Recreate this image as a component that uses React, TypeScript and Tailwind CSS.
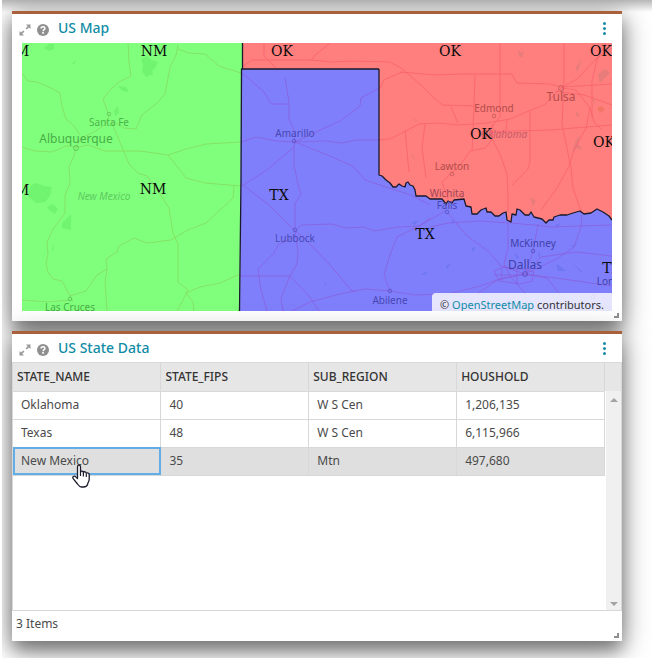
import type { ReactNode } from "react";

const rows = [
  { name: "Oklahoma", fips: "40", region: "W S Cen", households: "1,206,135" },
  { name: "Texas", fips: "48", region: "W S Cen", households: "6,115,966" },
  { name: "New Mexico", fips: "35", region: "Mtn", households: "497,680", selected: true },
];

const columns = ["STATE_NAME", "STATE_FIPS", "SUB_REGION", "HOUSHOLD"];

const river =
  "L379 175 L382 176 L386 180 L390 183 L393 187 L396 187 L399 184 L402 186 L405 187 L406 183 L408 182 L410 185 L413 186 L415 190 L416 196 L426 196 L430 199 L442 199 L446 204 L448 201 L452 203 L454 200 L464 199 L466 206 L471 207 L472 214 L477 214 L481 210 L486 208 L487 212 L491 212 L495 216 L499 216 L503 213 L506 212 L507 220 L511 222 L512 214 L516 215 L517 209 L520 210 L525 215 L529 215 L531 212 L534 217 L538 218 L542 219 L546 223 L549 220 L553 220 L554 217 L560 215 L567 215 L573 213 L580 211 L584 214 L591 213 L597 209 L603 212 L606 214 L609 216 L612 220";

const greenRoads = [
  "M128 43 L129 62 L131 76 L119 82 L111 89 L106 95 L103 99 L107 110 L109 116 L106 124 L94 132 L81 138 L76 147 L74 156 L69 167 L70 183 L65 195 L65 213 L53 229 L47 242 L48 254 L46 264 L48 272 L53 279 L62 281 L70 296 L86 291 L97 275 L107 269",
  "M22 73 L28 81 L37 82 L51 88 L60 93 L62 106 L66 119 L74 126 L80 135",
  "M22 147 L35 151 L52 152 L66 146 L78 147 L88 145 L105 151 L140 151 L168 155 L186 149 L206 144 L241 142",
  "M111 121 L122 147 L129 164 L138 173 L147 176 L158 191 L169 208 L173 233 L178 244 L178 282 L188 290 L182 302 L177 311",
  "M112 121 L124 128 L136 129 L142 115 L156 104 L165 94 L170 67 L176 55 L178 45",
  "M178 49 L189 53 L205 54 L219 66 L241 73",
  "M107 311 L105 281 L107 270 L106 259 L117 252 L119 246 L134 238 L147 243 L171 240 L188 230 L206 223 L220 210 L233 198 L234 186",
  "M186 293 L200 287 L220 283 L240 274 M186 293 L193 302 L194 311 M70 296 L73 302 M22 300 L48 302 L70 300",
  "M168 155 L180 170 L186 178 L205 183 L241 186",
];

const blueRoads = [
  "M242 73 L264 92 L271 104 L288 104 M285 78 L289 102 L289 119 L295 132 L294 148 L294 165 L298 184 L301 194 L295 204 L295 231 L298 252 L297 264 L290 276 L281 298 L283 311",
  "M241 142 L256 137 L276 141 L295 142 L325 141 L342 143 L356 140 L379 140",
  "M295 142 L316 132 L340 121 L360 106 L361 98 L379 88",
  "M242 186 L268 169 L294 147 M244 186 L269 205 L292 228 L307 241 L331 266 L351 290 L356 292",
  "M295 142 L325 154 L353 166 L365 180 L386 187 L411 195 L430 205",
  "M295 231 L301 225 L332 224 L345 228 L363 227 L375 231 L398 227 L420 226 L430 218",
  "M240 276 L290 276 L309 296 L319 311 M295 236 L278 245 L274 253 L258 269 L261 290 L267 311",
  "M292 311 L310 302 L340 294 L365 289 L390 291 L415 295 L448 294 L480 286 L503 278 L525 274 L556 278 L612 286",
  "M390 291 L384 275 L391 252 L397 237 L419 226 L445 211",
  "M447 212 L466 235 L489 252 L501 266 L525 274 L533 252 L538 224 M508 223 L508 248 L504 264 L510 276 L524 292 L530 311",
  "M430 227 L448 223 L480 221 L510 223 L534 225 L552 227 L579 226 L612 225",
  "M582 214 L581 227 L574 247 L558 258 L525 274 M459 311 L477 294 L497 280 L525 274 L547 278 L565 301 L575 311",
  "M525 274 L541 257 L576 252 L612 256 M494 271 L504 267 L521 269 L534 272 L532 281 L520 284 L499 281 Z M502 269 L501 280 M517 268 L517 284 M494 275 L533 275",
];

const redRoads = [
  "M243 66 L252 60 L267 60 L312 60 L314 56 L330 43 M264 43 L264 56 L276 68 M311 60 L332 62 L350 61 L390 62 L401 68 L421 85 L430 94 L442 105 L475 106",
  "M400 72 L436 75 L459 74 L512 74 L517 83 L550 84 L561 87 L612 84",
  "M380 88 L384 80 L402 72",
  "M379 140 L390 139 L404 132 L419 124 L439 123 L458 125 L487 123 L510 119 L526 112 L544 105 L561 88 L577 79 L597 58 L612 48",
  "M500 43 L500 117 L491 127 L492 140 L485 148 L470 151 L461 164 L442 182 L448 199",
  "M405 130 L409 172 M425 124 L422 148 L426 178",
  "M475 75 L474 106 L472 150 M451 107 L458 123",
  "M493 124 L492 139 L500 154 L507 174 L508 195 L508 212",
  "M490 132 L515 131 L552 130 L574 128 L612 125 M507 120 L506 132",
  "M530 111 L530 161 L528 169 L512 185 M564 43 L564 80 L562 124 L571 168 L573 188 L581 211",
  "M562 88 L576 90 L590 108 L594 122 L601 129 M590 108 L586 128 L574 150 L569 166 L557 188 L541 210",
  "M592 118 L592 81 L597 60 L606 43 M555 91 L584 95 L612 105",
];

type Place = { label: string; x: number; y: number; fill: string; size?: "lg"; italic?: boolean; dot?: [number, number] };

const places: Place[] = [
  { label: "Santa Fe", x: 109, y: 126, fill: "#4cb54a", dot: [109, 114] },
  { label: "Albuquerque", x: 76, y: 143, fill: "#48ae46", size: "lg", dot: [76, 148] },
  { label: "New Mexico", x: 104, y: 200, fill: "#5fcb60", italic: true },
  { label: "Las Cruces", x: 70, y: 311, fill: "#48ae46", dot: [70, 299] },
  { label: "Amarillo", x: 295, y: 137, fill: "#4747b4", dot: [294, 141] },
  { label: "Lubbock", x: 295, y: 242, fill: "#4747b4", dot: [295, 230] },
  { label: "Abilene", x: 390, y: 304, fill: "#4747b4", dot: [390, 291] },
  { label: "Edmond", x: 494, y: 112, fill: "#b44c4c", dot: [494, 116] },
  { label: "Tulsa", x: 561, y: 101, fill: "#b44c4c", size: "lg", dot: [561, 88] },
  { label: "Oklahoma", x: 504, y: 138, fill: "#c65a68", italic: true },
  { label: "Lawton", x: 452, y: 170, fill: "#b44c4c", dot: [452, 174] },
  { label: "Wichita", x: 447, y: 197, fill: "#a34453" },
  { label: "Falls", x: 447, y: 209, fill: "#4747b4", dot: [447, 212] },
  { label: "McKinney", x: 533, y: 247, fill: "#4040a8", dot: [533, 251] },
  { label: "Dallas", x: 525, y: 269, fill: "#4040a8", size: "lg", dot: [525, 274] },
  { label: "Longview", x: 619, y: 285, fill: "#4040a8", dot: [593, 297] },
];

const stateLabels: [string, number, number][] = [
  ["NM", 16, 56],
  ["NM", 154, 56],
  ["OK", 282, 56],
  ["OK", 450, 56],
  ["OK", 601, 56],
  ["OK", 481, 139],
  ["OK", 604, 147],
  ["NM", 16, 195],
  ["NM", 153, 194],
  ["TX", 279, 200],
  ["TX", 425, 239],
  ["TX", 612, 273],
];

function StateMap() {
  return (
    <svg
      viewBox="22 43 590 268"
      preserveAspectRatio="xMidYMid slice"
      className="block h-full w-full"
      role="img"
      aria-label="Map of New Mexico, Oklahoma and Texas"
    >
      <path fill="#80ff7c" d="M22 43 H243 V69 H241 L240 311 H22 Z" />
      <path fill="#fe7f7d" d="M243 43 H612 V220 L612 311 H379 V69 H243 Z" />
      <path fill="#7f7ffb" d={`M241 69 H379 ${river} V311 H240 Z`} />

      <g fill="#50dc52" opacity="0.3">
        <path d="M141 59 l6 -3 5 4 6 2 -3 6 -3 3 1 3 -7 3 -4 -6 1 -6 Z" />
        <path d="M118 86 l8 1 3 5 -6 -1 Z M114 110 l4 -4 1 7 -4 3 Z M49 44 h5 v5 l-5 2 -5 -3 Z" />
        <path d="M30 186 l6 -3 8 3 8 1 -2 9 -5 6 -9 1 -8 -7 Z M47 207 l6 -3 5 5 -3 5 -5 -3 Z" />
        <path d="M62 223 l9 -9 0 16 -9 -2 Z M72 63 l4 -3 -2 5 Z M52 248 l2 -5 -1 10 Z" />
      </g>
      <g fill="#5068e8" opacity="0.35">
        <path d="M411 223 l7 -3 -3 5 Z M421 275 l5 -4 1 3 Z M323 282 l4 2 -1 1 Z" />
        <path d="M451 222 l4 -3 -3 6 Z M555 225 l7 -2 -5 4 Z M571 246 l8 -3 -6 4 Z M446 266 l5 -3 -4 6 Z" />
        <path d="M556 263 l5 4 5 4 -8 0 Z M573 264 l9 7 0 2 Z M514 252 l5 5 -2 2 Z M538 254 l2 -3 0 8 Z M471 249 l4 -3 -1 6 Z" />
      </g>
      <g fill="#9a7474" opacity="0.22">
        <path d="M518 49 l3 4 3 -3 -2 7 -3 0 Z M575 110 l5 5 -3 2 Z M576 67 l6 -8 -5 14 Z M598 74 l7 -5 5 4 -10 10 Z" />
        <path d="M576 140 l4 -5 -2 9 5 6 -6 -2 -5 4 Z M592 95 l3 6 -1 3 Z M411 153 l4 5 -1 2 Z M413 117 l4 4 -1 1 Z M530 198 l6 2 -3 6 Z" />
      </g>
      <path d="M597 108 l5 -2 3 4 -5 3 Z" fill="#e67050" opacity="0.5" />

      <g fill="none" strokeWidth="1" strokeLinejoin="round">
        {greenRoads.map((d) => (
          <path key={d} d={d} stroke="#86d85c" opacity="0.75" />
        ))}
        {redRoads.map((d) => (
          <path key={d} d={d} stroke="#f8606c" opacity="0.75" />
        ))}
        {blueRoads.map((d) => (
          <path key={d} d={d} stroke="#8a5fdc" opacity="0.75" />
        ))}
        <path d={`M242.500 43 V69 M379 69 H241.500 L241 180 L239.500 311 M379 69 ${river}`} stroke="#1a1a2c" strokeWidth="1.300" />
      </g>

      {places.map((p) => (
        <g key={p.label}>
          {p.dot && (
            <circle cx={p.dot[0]} cy={p.dot[1]} r={p.size ? 2.5 : 1.8} fill="none" stroke={p.fill} opacity="0.6" />
          )}
          <text
            x={p.x}
            y={p.y}
            fill={p.fill}
            textAnchor="middle"
            className={p.size ? "text-[12px]" : p.italic ? "text-[10px] italic" : "text-[10px]"}
          >
            {p.label}
          </text>
        </g>
      ))}

      <g className="font-['DejaVu_Serif',serif] text-[14px]" fill="#0a0a0a" textAnchor="middle">
        {stateLabels.map(([label, x, y]) => (
          <text key={`${x}-${y}`} x={x} y={y}>
            {label}
          </text>
        ))}
      </g>
    </svg>
  );
}

function ExpandIcon() {
  return (
    <svg viewBox="0 0 12 12" className="size-3" fill="#999999">
      <path d="M7 0.500 H11.500 V5 L9.900 3.400 L7.800 5.400 L6.700 4.300 L8.700 2.200 Z" />
      <path d="M5 11.500 H0.500 V7 L2.100 8.600 L4.200 6.600 L5.300 7.700 L3.300 9.800 Z" />
    </svg>
  );
}

function HelpIcon() {
  return (
    <svg viewBox="0 0 12 12" className="size-3">
      <circle cx="6" cy="6" r="6" fill="#8f8f8f" />
      <path d="M4.100 4.600 C4.100 3.300 5 2.700 6 2.700 C7.100 2.700 7.900 3.400 7.900 4.400 C7.900 5.600 6.100 5.700 6.100 7.200" fill="none" stroke="#fff" strokeWidth="1.500" />
      <rect x="5.200" y="8" width="1.700" height="1.700" fill="#fff" />
    </svg>
  );
}

function HandCursor() {
  return (
    <svg viewBox="0 0 18 24" className="pointer-events-none absolute left-[59px] top-[16px] z-10 h-6 w-[18px]" aria-hidden="true">
      <path
        d="M5.500 14.500 V3 C5.500 0.600 8.500 0.600 8.500 3 V8 C9 6.600 11.200 6.800 11.400 8.400 C12.200 7.300 14.200 7.700 14.300 9.200 C15.300 8.400 17.200 9 17.200 10.600 V15.500 C17.200 17.500 15.600 18.500 15.600 20.500 C15 22 13.500 23 11.500 23 H9.500 C7.500 23 6.500 21.500 5.500 20 L1.200 14.600 C0 12.800 2 11.400 3.500 12.600 Z"
        fill="#fff"
        stroke="#1c1c2c"
        strokeWidth="1.300"
        strokeLinejoin="round"
      />
      <path d="M8.500 8 V12 M11.400 8.500 V12.500 M14.300 9.500 V13" stroke="#1c1c2c" strokeWidth="1.200" />
    </svg>
  );
}

function Panel({ title, children }: { title: string; children: ReactNode }) {
  return (
    <section className="relative flex h-[310px] flex-col border-t-3 border-[#a9603b] bg-white shadow-[0_10px_16px_rgba(0,0,0,0.35),0_6px_28px_rgba(0,0,0,0.4)]">
      <header className="flex h-7 shrink-0 items-center pl-[7px] pr-3">
        <button type="button" aria-label={`Expand ${title}`} className="mr-1.5 mt-1">
          <ExpandIcon />
        </button>
        <button type="button" aria-label={`Help for ${title}`} className="mr-[9px] mt-1">
          <HelpIcon />
        </button>
        <h2 className="flex-1 text-[14px] leading-5 font-medium text-[#128ca6]">{title}</h2>
        <button type="button" aria-label={`${title} menu`} className="flex w-3 flex-col items-center gap-0.5">
          <span className="size-[3px] rounded-full bg-[#128ca6]" />
          <span className="size-[3px] rounded-full bg-[#128ca6]" />
          <span className="size-[3px] rounded-full bg-[#128ca6]" />
        </button>
      </header>
      {children}
      <span className="absolute bottom-[3px] right-[3px] size-[5px] border-b-2 border-r-2 border-[#8f8f8f]" />
    </section>
  );
}

export default function App() {
  return (
    <div className="min-h-screen overflow-hidden bg-white pl-0.5 font-['Noto_Sans',sans-serif] text-[12px] text-[#4a4a4a]">
      <main className="relative flex min-h-screen flex-col gap-2.5 overflow-hidden pb-4 pl-2.5 pr-[30px] pt-[11px]">
        <div className="absolute inset-x-0 top-0 h-3 bg-linear-to-b from-[#b8b8b8] to-white" />
        <Panel title="US Map">
          <div className="relative mx-2.5 mt-px h-[268px] overflow-hidden">
            <StateMap />
            <p className="absolute bottom-0 right-0 h-[18px] rounded-tl-sm bg-white/80 px-2 pt-1 text-[11px] leading-4 text-[#333]">
              © <a href="#osm" className="text-[#128ca6]">OpenStreetMap</a> contributors.
            </p>
          </div>
        </Panel>

        <Panel title="US State Data">
          <div className="flex min-h-0 flex-1 border border-[#d8d8d8]">
            <table className="w-full table-fixed self-start border-collapse text-left">
              <thead>
                <tr className="h-7 bg-[#e6e6e6] text-[#333]">
                  {columns.map((c) => (
                    <th key={c} scope="col" className="border-b border-r border-[#d8d8d8] px-1 py-0 font-medium">
                      {c}
                    </th>
                  ))}
                </tr>
              </thead>
              <tbody>
                {rows.map((r) => (
                  <tr key={r.name} className={r.selected ? "h-7 bg-[#dfdfdf]" : "h-7"}>
                    <td
                      className={
                        r.selected
                          ? "relative border-b border-r border-[#d8d8d8] px-2 py-0 outline-2 -outline-offset-2 outline-[#63ade6]"
                          : "border-b border-r border-[#d8d8d8] px-2 py-0"
                      }
                    >
                      {r.name}
                      {r.selected && <HandCursor />}
                    </td>
                    <td className="border-b border-r border-[#d8d8d8] px-2 py-0">{r.fips}</td>
                    <td className="border-b border-r border-[#d8d8d8] px-2 py-0">{r.region}</td>
                    <td className="border-b border-r border-[#d8d8d8] px-2 py-0">{r.households}</td>
                  </tr>
                ))}
              </tbody>
            </table>
            <div className="flex w-4 shrink-0 flex-col">
              <div className="h-7 bg-[#e6e6e6]" />
              <div className="ml-px flex flex-1 flex-col items-center justify-between bg-[#f0f0f0] pb-1 pt-[7px]">
                <span className="size-0 border-x-4 border-b-4 border-x-transparent border-b-[#a3a3a3]" />
                <span className="size-0 border-x-4 border-t-4 border-x-transparent border-t-[#a3a3a3]" />
              </div>
            </div>
          </div>
          <footer className="h-[30px] shrink-0 px-1 pt-1 leading-[18px]">3 Items</footer>
        </Panel>
      </main>
    </div>
  );
}
